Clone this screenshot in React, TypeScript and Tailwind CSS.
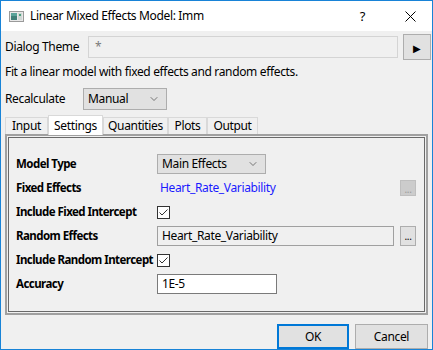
import { ChevronDown } from "lucide-react"

const font = { fontFamily: '"Noto Sans", "Open Sans", sans-serif', letterSpacing: "-0.35px" }

const WindowIcon = () => (
    <svg width="15" height="11" viewBox="0 0 15 11">
        <rect x="0.5" y="0.5" width="14" height="10" fill="#e8e8e8" stroke="#9a9a9a" />
        <rect x="2" y="2" width="6" height="7" fill="#3f7f78" />
        <rect x="2" y="2" width="6" height="3" fill="#5aa39a" />
        <rect x="9" y="2" width="4" height="7" fill="#cfd8d6" />
        <rect x="10" y="3" width="2" height="2" fill="#4d9f7c" />
    </svg>
)

const Check = () => (
    <div className="w-[13px] h-[13px] border border-[#333333] bg-white flex items-center justify-center">
        <svg width="11" height="11" viewBox="0 0 11 11">
            <path d="M1.5 5.5 L4 8 L9.5 2.5" fill="none" stroke="#333333" strokeWidth="1" />
        </svg>
    </div>
)

// bold labels run wider than Segoe UI, so squeeze them a bit
const Row = ({ label, children }: { label: string, children?: React.ReactNode }) => (
    <div className="flex items-center h-6">
        <div className="w-[141px] font-bold whitespace-nowrap text-[11.5px] tracking-[-0.55px]">{label}</div>
        {children}
    </div>
)

const tabs = [
    { name: "Input", w: "w-[43px]" },
    { name: "Settings", w: "w-[55px]" },
    { name: "Quantities", w: "w-[65px]" },
    { name: "Plots", w: "w-[39px]" },
    { name: "Output", w: "w-[51px]" },
]

const App = () => {
    return (
        <div style={font} className="w-[433px] h-[350px] border border-[#1883d7] bg-[#f0f0f0] flex flex-col text-[12px] leading-4 text-black overflow-hidden">
            {/* Title bar */}
            <div className="h-[30px] bg-white flex items-center shrink-0">
                <div className="ml-[8px] mt-[1px]"><WindowIcon /></div>
                <div className="ml-[6px] text-[12px]">Linear Mixed Effects Model: Imm</div>
                <div className="ml-auto mr-[40px] text-[13px]">?</div>
                <svg width="11" height="11" viewBox="0 0 11 11" className="mr-[16px]">
                    <path d="M0.5 0.5 L10.5 10.5 M10.5 0.5 L0.5 10.5" stroke="#000" strokeWidth="1" />
                </svg>
            </div>

            <div className="pl-[4px] flex flex-col">
                {/* Dialog theme */}
                <div className="flex items-center h-[26px] mt-[3px]">
                    <div className="w-[83px]">Dialog Theme</div>
                    <div className="w-[310px] h-[22px] border border-[#d4d4d4] flex items-center px-[6px] text-[#7a7a7a]">*</div>
                    <div className="ml-[5px] w-[28px] h-[26px] bg-[#e1e1e1] border border-[#adadad] flex items-center justify-center text-[10px] pt-[2px]">▶</div>
                </div>

                <div className="mt-[4px]">Fit a linear model with fixed effects and random effects.</div>

                {/* Recalculate */}
                <div className="flex items-center h-[22px] mt-[8px]">
                    <div className="w-[78px]">Recalculate</div>
                    <div className="w-[84px] h-[22px] bg-[#e1e1e1] border border-[#adadad] flex items-center pl-[4px] pr-[6px]">
                        <span>Manual</span>
                        <ChevronDown size={12} strokeWidth={1.25} className="ml-auto text-[#333]" />
                    </div>
                </div>

                {/* Tabs */}
                <div className="flex items-end h-[18px] mt-[6px] relative z-10">
                    {tabs.map((t) => t.name === "Settings" ? (
                        <div key={t.name} className={`${t.w} h-[20px] -mb-[1px] bg-white border border-b-0 border-[#d9d9d9] flex items-center justify-center`}>{t.name}</div>
                    ) : (
                        <div key={t.name} className={`${t.w} h-[17px] border border-[#d9d9d9] border-b-0 flex items-center justify-center`}>{t.name}</div>
                    ))}
                </div>

                {/* Panel */}
                <div className="w-[423px] h-[181px] border-2 border-[#a0a0a0] p-[1px]">
                    <div className="h-full border border-[#696969] pt-[14px] pl-[7px]">
                        <Row label="Model Type">
                            <div className="w-[109px] h-[20px] bg-[#e1e1e1] border border-[#adadad] flex items-center pl-[4px] pr-[6px]">
                                <span>Main Effects</span>
                                <ChevronDown size={12} strokeWidth={1.25} className="ml-auto text-[#333]" />
                            </div>
                        </Row>
                        <Row label="Fixed Effects">
                            <div className="w-[237px] pl-[3px] text-[#1a1aff]">Heart_Rate_Variability</div>
                            <div className="ml-[6px] w-[16px] h-[16px] bg-[#cccccc] border border-[#bfbfbf] flex items-end justify-center text-[#9a9a9a] text-[10px] leading-3">...</div>
                        </Row>
                        <Row label="Include Fixed Intercept">
                            <Check />
                        </Row>
                        <Row label="Random Effects">
                            <div className="w-[237px] h-[20px] border border-[#a0a0a0] flex items-center pl-[4px]">Heart_Rate_Variability</div>
                            <div className="ml-[6px] w-[16px] h-[20px] bg-[#e1e1e1] border border-[#adadad] flex items-center justify-center text-[10px]">...</div>
                        </Row>
                        <Row label="Include Random Intercept">
                            <Check />
                        </Row>
                        <Row label="Accuracy">
                            <div className="w-[120px] h-[20px] bg-white border border-[#7a7a7a] flex items-center pl-[4px]">1E-5</div>
                        </Row>
                    </div>
                </div>

                {/* Buttons */}
                <div className="flex mt-[9px] pl-[272px]">
                    <div className="w-[72px] h-[25px] bg-[#e1e1e1] border-2 border-[#0078d7] flex items-center justify-center">OK</div>
                    <div className="ml-[6px] w-[73px] h-[25px] bg-[#e1e1e1] border border-[#adadad] flex items-center justify-center">Cancel</div>
                </div>
            </div>
        </div>
    )
}

export default App
